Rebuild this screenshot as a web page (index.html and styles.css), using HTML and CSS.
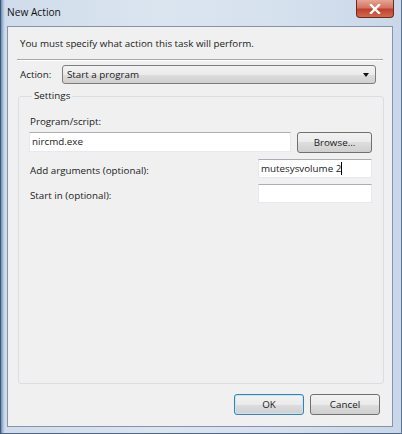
FILE: index.html
```html
<!DOCTYPE html>
<html lang="en">
<head>
    <meta charset="UTF-8">
    <meta name="viewport" content="width=device-width, initial-scale=1.0">
    <title>New Action</title>
    <link rel="stylesheet" href="styles.css">
</head>
<body>
    <div class="window">
        <div class="titlebar">
            <span class="title">New Action</span>
            <div class="close-btn">
                <svg width="12" height="10" viewBox="0 0 12 10">
                    <path d="M2 1 L10 9 M10 1 L2 9" stroke="#fff" stroke-width="2.4" stroke-linecap="square"/>
                </svg>
            </div>
        </div>

        <div class="client">
            <p class="intro">You must specify what action this task will perform.</p>
            <div class="separator"></div>

            <div class="action-row">
                <span class="label">Action:</span>
                <div class="select">
                    <span>Start a program</span>
                    <span class="arrow"></span>
                </div>
            </div>

            <fieldset class="group">
                <legend>Settings</legend>

                <div class="field-label">Program/script:</div>
                <div class="program-row">
                    <div class="textbox wide">nircmd.exe</div>
                    <div class="button browse">Browse...</div>
                </div>

                <div class="option-row">
                    <span class="label">Add arguments (optional):</span>
                    <div class="textbox short">mutesysvolume 2<span class="caret"></span></div>
                </div>
                <div class="option-row">
                    <span class="label">Start in (optional):</span>
                    <div class="textbox short"></div>
                </div>
            </fieldset>

            <div class="footer">
                <div class="button default">OK</div>
                <div class="button">Cancel</div>
            </div>
        </div>
    </div>
</body>
</html>
```

FILE: styles.css
```css
html, body {
    margin: 0;
    padding: 0;
}
body {
    width: 402px;
    height: 434px;
    overflow: hidden;
    font-family: "Open Sans", "Noto Sans", sans-serif;
    font-size: 9.8px;
    color: #1a1a1a;
}
.window {
    box-sizing: border-box;
    width: 402px;
    height: 434px;
    display: flex;
    flex-direction: column;
    padding: 0 8px 6px 6px;
    background: linear-gradient(90deg, #6d8bb1 0, #a9bfd9 2px, #d0dceb 4px, #dbe5f0 40%, #d6e1ee 70%, #c9d7e8 100%);
    border-left: 1px solid #3f5674;
    border-right: 1px solid #5b7394;
    border-bottom: 1px solid #4d6483;
}
.titlebar {
    height: 26px;
    display: flex;
    justify-content: space-between;
    align-items: flex-start;
}
.title {
    margin-top: 5px;
    font-size: 10.2px;
    color: #111;
}
.close-btn {
    width: 38px;
    height: 18px;
    margin-right: -1px;
    display: flex;
    align-items: center;
    justify-content: center;
    border: 1px solid #6a2a22;
    border-top: none;
    border-radius: 0 0 4px 4px;
    background: linear-gradient(#e8a493 0, #d27563 45%, #c0412b 55%, #d3694f 100%);
    box-sizing: border-box;
}
.client {
    flex: 1;
    background: #f0f0f0;
    border: 1px solid #8494ab;
    display: flex;
    flex-direction: column;
    padding: 0 9px 0 9px;
}
.intro {
    margin: 9px 0 0 3px;
    line-height: 15px;
}
.separator {
    height: 0;
    border-top: 1px solid #a8a8a8;
    border-bottom: 1px solid #fff;
    margin: 8px 0 0 0;
}
.action-row {
    display: flex;
    align-items: center;
    margin-top: 4px;
}
.action-row .label {
    width: 42px;
    padding-left: 3px;
}
.select {
    flex: 1;
    height: 19px;
    margin-right: 7px;
    box-sizing: border-box;
    border: 1px solid #7d7d7d;
    border-radius: 3px;
    background: linear-gradient(#f3f3f3 0, #ebebeb 50%, #dddddd 50%, #d0d0d0 100%);
    display: flex;
    align-items: center;
    justify-content: space-between;
    padding: 0 6px 0 4px;
}
.arrow {
    width: 0;
    height: 0;
    border-left: 3.5px solid transparent;
    border-right: 3.5px solid transparent;
    border-top: 4px solid #111;
}
.group {
    margin: 5px 1px 0 1px;
    padding: 12px 11px 0 10px;
    height: 295px;
    box-sizing: border-box;
    border: 1px solid #d9dee3;
    border-radius: 3px;
}
.group legend {
    padding: 0 2px;
    margin-left: 3px;
    line-height: 14px;
}
.field-label {
    padding-left: 1px;
    line-height: 14px;
}
.program-row {
    display: flex;
    gap: 6px;
    margin-top: 3px;
}
.textbox {
    box-sizing: border-box;
    height: 20px;
    background: #fff;
    border: 1px solid #e3e9ef;
    border-top-color: #abadb3;
    padding: 0 2px;
    line-height: 18px;
}
.textbox.wide {
    width: 262px;
}
.textbox.short {
    width: 114px;
    height: 19px;
    line-height: 17px;
}
.caret {
    display: inline-block;
    width: 1px;
    height: 13px;
    background: #000;
    vertical-align: -3px;
}
.button {
    box-sizing: border-box;
    width: 70px;
    height: 21px;
    border: 1px solid #707070;
    border-radius: 3px;
    background: linear-gradient(#f2f2f2 0, #ebebeb 50%, #dddddd 50%, #cfcfcf 100%);
    display: flex;
    align-items: center;
    justify-content: center;
}
.browse {
    width: 75px;
}
.option-row {
    display: flex;
    justify-content: space-between;
    align-items: center;
    margin-top: 6px;
}
.option-row + .option-row {
    margin-top: 6px;
}
.option-row .label {
    padding-left: 1px;
    padding-top: 4px;
}
.footer {
    margin-top: 10px;
    display: flex;
    justify-content: flex-end;
    gap: 6px;
    padding-right: 3px;
}
.button.default {
    border-color: #3c7fb1;
    box-shadow: inset 0 0 0 1px #c5e6f7;
}
```
